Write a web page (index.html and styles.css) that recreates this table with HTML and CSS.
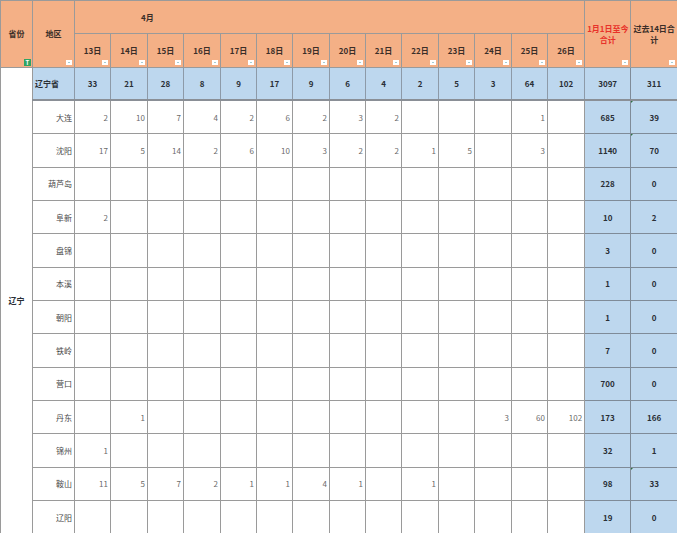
FILE: index.html
```html
<!DOCTYPE html>
<html lang="zh">
<head>
<meta charset="utf-8">
<title>辽宁</title>
<link rel="stylesheet" href="styles.css">
</head>
<body>
<table class="sheet">
<colgroup>
<col class="c-prov"><col class="c-reg">
<col class="c36"><col class="c37"><col class="c36"><col class="c37"><col class="c36"><col class="c36"><col class="c37"><col class="c36"><col class="c36"><col class="c37"><col class="c36"><col class="c37"><col class="c36"><col class="c37">
<col class="c-sum"><col class="c-14">
</colgroup>
<thead>
<tr class="hrow">
<th rowspan="2" class="hd">省份<span class="tag-t">T</span></th>
<th rowspan="2" class="hd">地区<span class="flt"></span></th>
<th colspan="14" class="hd month">4月</th>
<th rowspan="2" class="hd red">1月1日至今<br>合计<span class="flt"></span></th>
<th rowspan="2" class="hd">过去14日合<br>计<span class="flt"></span></th>
</tr>
<tr class="hrow">
<th class="hd">13日<span class="flt"></span></th>
<th class="hd">14日<span class="flt"></span></th>
<th class="hd">15日<span class="flt"></span></th>
<th class="hd">16日<span class="flt"></span></th>
<th class="hd">17日<span class="flt"></span></th>
<th class="hd">18日<span class="flt"></span></th>
<th class="hd">19日<span class="flt"></span></th>
<th class="hd">20日<span class="flt"></span></th>
<th class="hd">21日<span class="flt"></span></th>
<th class="hd">22日<span class="flt"></span></th>
<th class="hd">23日<span class="flt"></span></th>
<th class="hd">24日<span class="flt"></span></th>
<th class="hd">25日<span class="flt"></span></th>
<th class="hd">26日<span class="flt"></span></th>
</tr>
</thead>
<tbody>
<tr class="prow">
<td rowspan="14" class="prov">辽宁</td>
<td class="pname">辽宁省</td>
<td>33</td><td>21</td><td>28</td><td>8</td><td>9</td><td>17</td><td>9</td><td>6</td><td>4</td><td>2</td><td>5</td><td>3</td><td>64</td><td>102</td>
<td class="tot">3097</td><td class="tot">311</td>
</tr>
<tr class="drow">
<td class="rname">大连</td>
<td>2</td><td>10</td><td>7</td><td>4</td><td>2</td><td>6</td><td>2</td><td>3</td><td>2</td><td></td><td></td><td></td><td>1</td><td></td>
<td class="tot">685</td><td class="tot mark">39</td>
</tr>
<tr class="drow">
<td class="rname">沈阳</td>
<td>17</td><td>5</td><td>14</td><td>2</td><td>6</td><td>10</td><td>3</td><td>2</td><td>2</td><td>1</td><td>5</td><td></td><td>3</td><td></td>
<td class="tot">1140</td><td class="tot mark">70</td>
</tr>
<tr class="drow">
<td class="rname">葫芦岛</td>
<td></td><td></td><td></td><td></td><td></td><td></td><td></td><td></td><td></td><td></td><td></td><td></td><td></td><td></td>
<td class="tot">228</td><td class="tot">0</td>
</tr>
<tr class="drow">
<td class="rname">阜新</td>
<td>2</td><td></td><td></td><td></td><td></td><td></td><td></td><td></td><td></td><td></td><td></td><td></td><td></td><td></td>
<td class="tot">10</td><td class="tot">2</td>
</tr>
<tr class="drow">
<td class="rname">盘锦</td>
<td></td><td></td><td></td><td></td><td></td><td></td><td></td><td></td><td></td><td></td><td></td><td></td><td></td><td></td>
<td class="tot">3</td><td class="tot">0</td>
</tr>
<tr class="drow">
<td class="rname">本溪</td>
<td></td><td></td><td></td><td></td><td></td><td></td><td></td><td></td><td></td><td></td><td></td><td></td><td></td><td></td>
<td class="tot">1</td><td class="tot">0</td>
</tr>
<tr class="drow">
<td class="rname">朝阳</td>
<td></td><td></td><td></td><td></td><td></td><td></td><td></td><td></td><td></td><td></td><td></td><td></td><td></td><td></td>
<td class="tot">1</td><td class="tot">0</td>
</tr>
<tr class="drow">
<td class="rname">铁岭</td>
<td></td><td></td><td></td><td></td><td></td><td></td><td></td><td></td><td></td><td></td><td></td><td></td><td></td><td></td>
<td class="tot">7</td><td class="tot">0</td>
</tr>
<tr class="drow">
<td class="rname">营口</td>
<td></td><td></td><td></td><td></td><td></td><td></td><td></td><td></td><td></td><td></td><td></td><td></td><td></td><td></td>
<td class="tot">700</td><td class="tot">0</td>
</tr>
<tr class="drow">
<td class="rname">丹东</td>
<td></td><td>1</td><td></td><td></td><td></td><td></td><td></td><td></td><td></td><td></td><td></td><td>3</td><td>60</td><td>102</td>
<td class="tot">173</td><td class="tot">166</td>
</tr>
<tr class="drow">
<td class="rname">锦州</td>
<td>1</td><td></td><td></td><td></td><td></td><td></td><td></td><td></td><td></td><td></td><td></td><td></td><td></td><td></td>
<td class="tot">32</td><td class="tot">1</td>
</tr>
<tr class="drow">
<td class="rname">鞍山</td>
<td>11</td><td>5</td><td>7</td><td>2</td><td>1</td><td>1</td><td>4</td><td>1</td><td></td><td>1</td><td></td><td></td><td></td><td></td>
<td class="tot">98</td><td class="tot mark">33</td>
</tr>
<tr class="drow">
<td class="rname">辽阳</td>
<td></td><td></td><td></td><td></td><td></td><td></td><td></td><td></td><td></td><td></td><td></td><td></td><td></td><td></td>
<td class="tot">19</td><td class="tot">0</td>
</tr>
</tbody>
</table>
</body>
</html>
```

FILE: styles.css
```css
html, body {
  margin: 0;
  padding: 0;
  background: #ffffff;
}

body {
  font-family: "Noto Sans CJK SC", "Noto Sans", sans-serif;
  font-size: 8px;
  color: #333333;
  overflow: hidden;
}

.sheet {
  border-collapse: collapse;
  table-layout: fixed;
  width: 677px;
}

.c-prov { width: 32px; }
.c-reg { width: 42px; }
.c36 { width: 36px; }
.c37 { width: 37px; }
.c-sum { width: 46px; }
.c-14 { width: 47px; }

.sheet tr {
  height: 33.33px;
}

.sheet th,
.sheet td {
  padding: 0 2px;
  border: 1px solid #9a9a9a;
  line-height: 11px;
  white-space: nowrap;
  overflow: visible;
}

.hd {
  position: relative;
  background: #f4b086;
  border-color: #8c7f78;
  font-weight: bold;
  color: #3a2e28;
  text-align: center;
  vertical-align: middle;
}

.sheet th.month {
  text-align: left;
  padding-left: 66px;
}

.red {
  color: #e8322a;
}

.flt {
  position: absolute;
  right: 2px;
  bottom: 2px;
  width: 6px;
  height: 5px;
  background: #ffffff;
}

.flt::after {
  content: "";
  position: absolute;
  left: 2px;
  top: 2px;
  border-left: 1px solid transparent;
  border-right: 1px solid transparent;
  border-top: 1.5px solid #4c9aa8;
}

.tag-t {
  position: absolute;
  right: 1px;
  bottom: 1px;
  width: 7px;
  height: 7px;
  background: #2fa463;
  color: #ffffff;
  font-size: 6px;
  line-height: 7px;
  text-align: center;
  font-weight: bold;
}

.prov {
  background: #ffffff;
  text-align: center;
  vertical-align: middle;
  font-weight: bold;
  color: #333333;
}

.prow td {
  background: #bdd7ee;
  border-color: #8d9aa8;
  text-align: center;
  font-weight: bold;
  color: #2a2f36;
}

.prow td.prov {
  background: #ffffff;
  border-color: #9a9a9a;
}

.prow td.pname {
  text-align: left;
}

.prow {
  border-bottom: 2px solid #8a8f96;
}

.drow td {
  text-align: right;
  color: #6a6a6a;
  background: #ffffff;
}

.drow td.rname {
  color: #4a4a4a;
}

.sheet td.tot {
  position: relative;
  background: #bdd7ee;
  border-color: #7f8b98;
  text-align: center;
  font-weight: bold;
  color: #2a2f36;
}

.sheet td.mark::before {
  content: "";
  position: absolute;
  left: 0;
  top: 0;
  border-top: 2px solid #2f6e40;
  border-right: 2px solid transparent;
}
```
